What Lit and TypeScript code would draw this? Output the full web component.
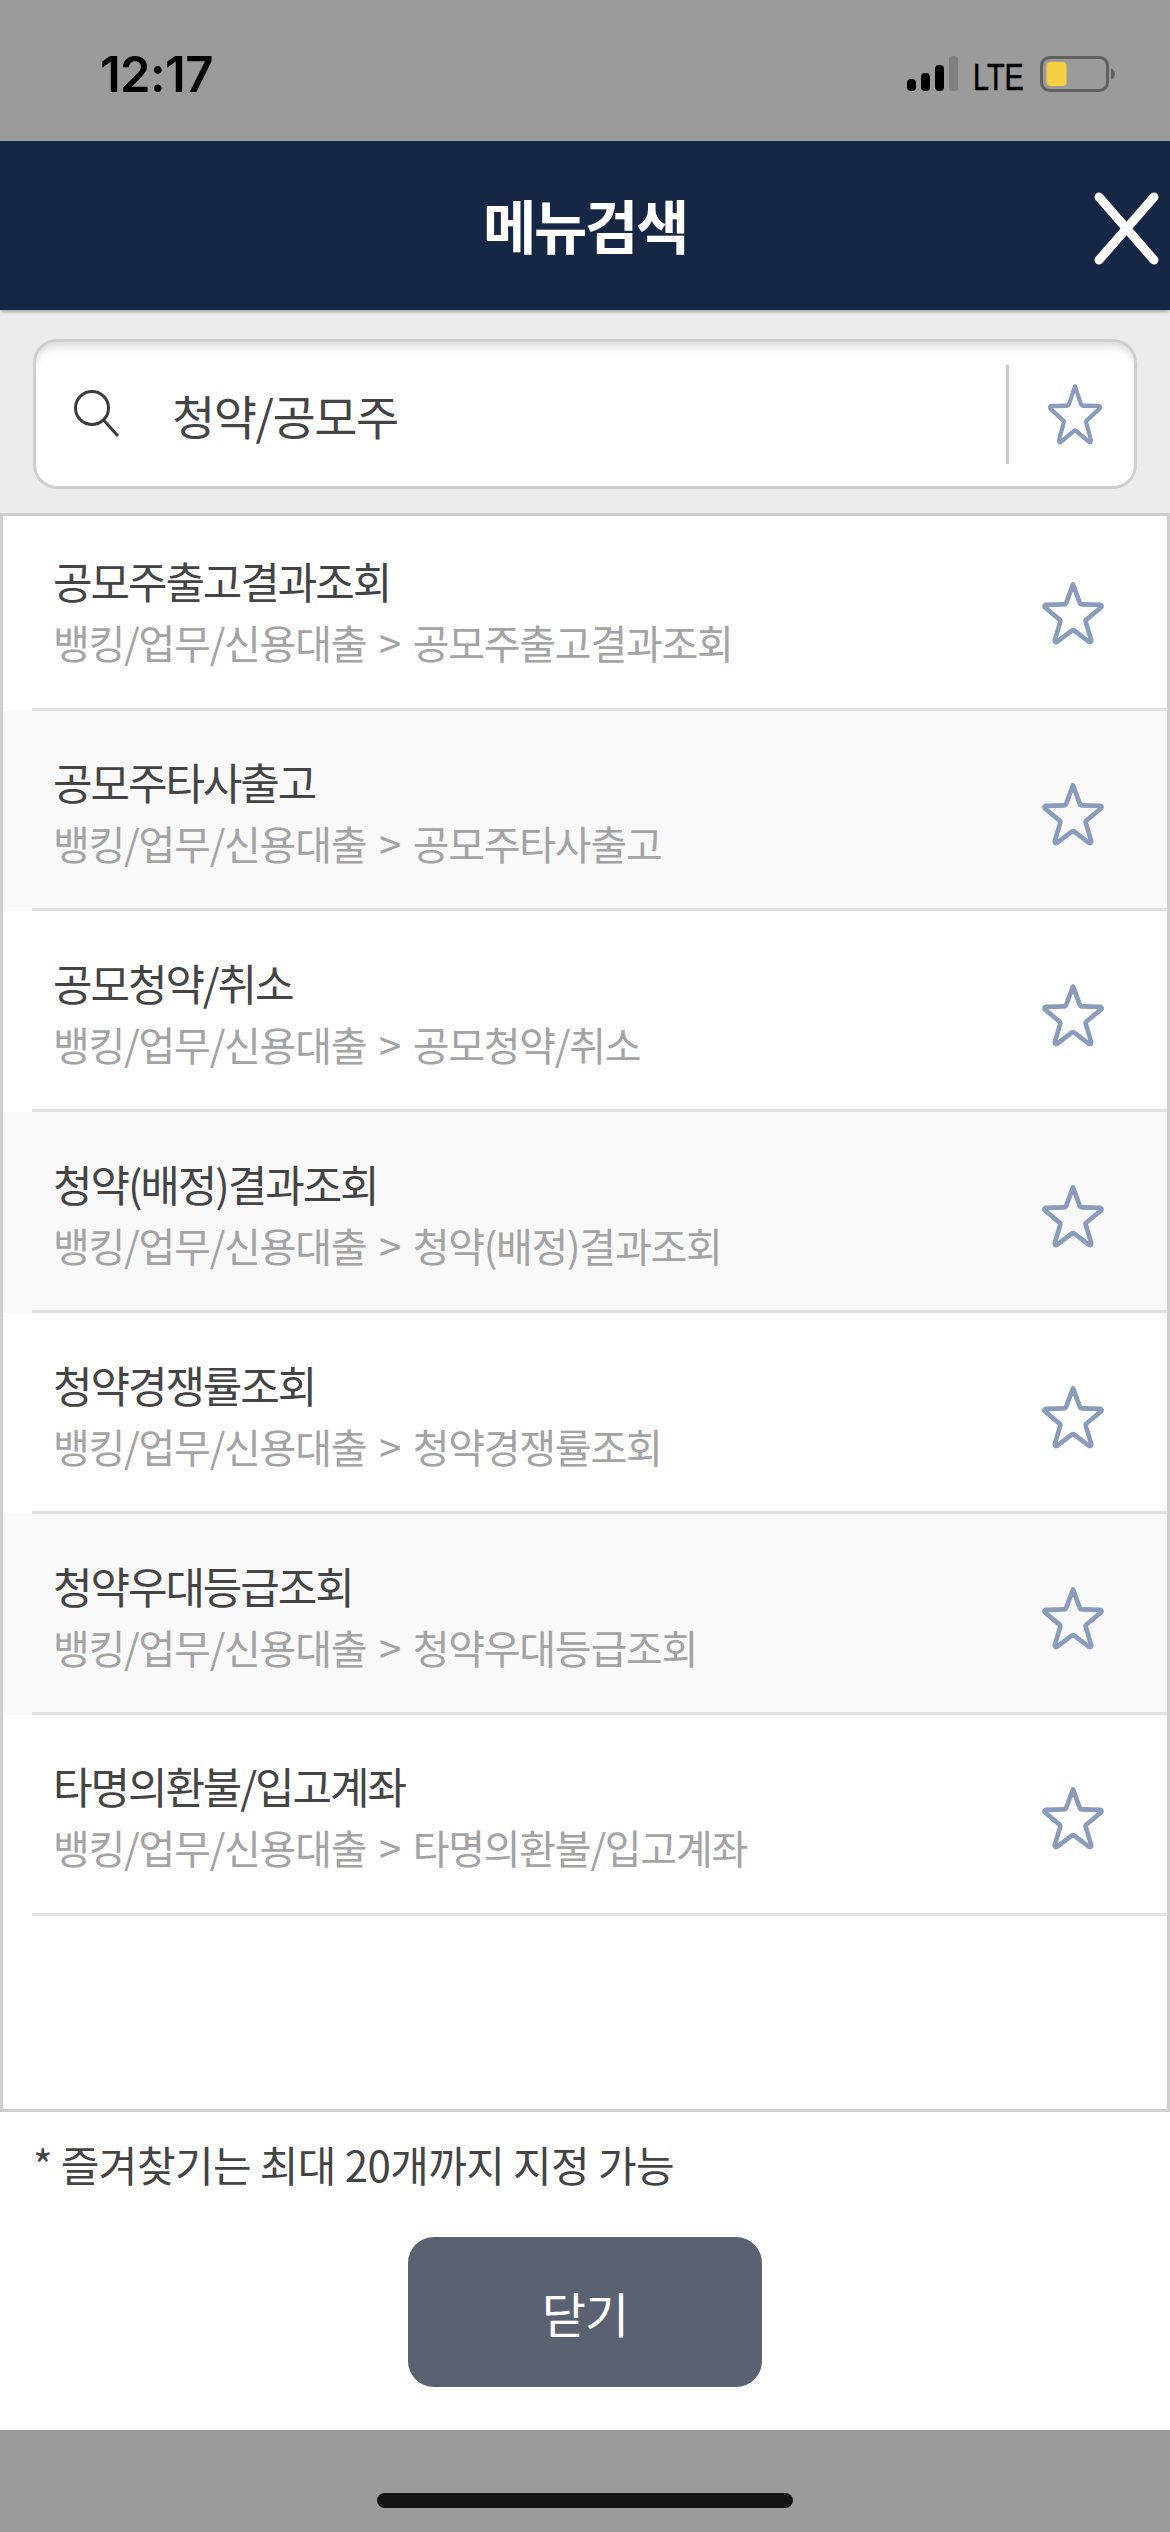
import { LitElement, html, css, svg } from "lit";
import { customElement } from "lit/decorators.js";

const rows = [
  ["공모주출고결과조회", "뱅킹/업무/신용대출 > 공모주출고결과조회"],
  ["공모주타사출고", "뱅킹/업무/신용대출 > 공모주타사출고"],
  ["공모청약/취소", "뱅킹/업무/신용대출 > 공모청약/취소"],
  ["청약(배정)결과조회", "뱅킹/업무/신용대출 > 청약(배정)결과조회"],
  ["청약경쟁률조회", "뱅킹/업무/신용대출 > 청약경쟁률조회"],
  ["청약우대등급조회", "뱅킹/업무/신용대출 > 청약우대등급조회"],
  ["타명의환불/입고계좌", "뱅킹/업무/신용대출 > 타명의환불/입고계좌"],
];

const star = (cls: string) => html`<svg class=${cls} viewBox="0 0 60 60" preserveAspectRatio="none" fill="none" stroke="#8a9cbc" stroke-width="4.2" stroke-linejoin="round" stroke-linecap="round">
  ${svg`<path d="M30 4 L36.2 20.8 Q36.8 22.2 38.2 22.2 L55 22.6 Q56.8 23.4 55.4 25 L42.2 36 Q41.2 36.8 41.6 38 L46.6 54.6 Q46.6 57.4 44.6 56.2 L31.2 46 Q30 45.2 28.8 46 L15.4 56.2 Q13.4 57.4 13.4 54.6 L18.4 38 Q18.8 36.8 17.8 36 L4.6 25 Q3.2 23.4 5 22.6 L21.8 22.2 Q23.2 22.2 23.8 20.8 Z"/>`}
</svg>`;

@customElement("app-root")
export class AppRoot extends LitElement {
  static styles = css`
    :host { display: block; width: 1170px; height: 2532px; font-family: "Noto Sans CJK KR", "Noto Sans", sans-serif; background: #fff; overflow: hidden; }
    .page { display: flex; flex-direction: column; height: 2532px; }
    .status { height: 141px; flex: none; background: #9b9b9b; display: flex; align-items: flex-start; justify-content: space-between; box-sizing: border-box; }
    .time { font: 600 49px/1 Inter, "Liberation Sans", sans-serif; color: #000; margin: 50px 0 0 100px; letter-spacing: -0.6px; }
    .status-right { display: flex; align-items: flex-start; margin: 56px 55px 0 0; }
    .signal { width: 52px; height: 35px; flex: none; }
    .lte { font: 400 36px/1 "Liberation Sans", sans-serif; -webkit-text-stroke: 0.6px #000; color: #000; margin: 4px 0 0 14px; width: 53px; white-space: nowrap; transform: scaleX(0.8); transform-origin: left center; }
    .battery { width: 75px; height: 36px; margin-left: 14px; flex: none; }
    .header { height: 169px; flex: none; background: #162745; display: flex; align-items: center; justify-content: center; position: relative; box-shadow: 0 3px 3px -1px #a8a8a8; z-index: 1; }
    .title { color: #fff; font-size: 58px; font-weight: 700; letter-spacing: -2.4px; line-height: 1; margin-top: -3px; }
    .close { position: absolute; left: 1094px; top: 51px; width: 66px; height: 74px; }
    .search-wrap { height: 203px; flex: none; background: #ececec; padding: 29px 33px 0 33px; box-sizing: border-box; }
    .search { height: 150px; box-sizing: border-box; background: #fff; border: 3px solid #cfcfcf; border-radius: 24px; display: flex; align-items: center; box-shadow: inset 0 10px 10px -6px #d8d8d8; }
    .mag { width: 46px; height: 48px; margin-left: 38px; flex: none; }
    .query { font-size: 47px; color: #444; letter-spacing: -1.5px; margin-left: 52px; flex: 1; line-height: 1; }
    .divider { width: 3px; height: 99px; background: #c8c8c8; flex: none; }
    .search-star { width: 58px; height: 64px; margin: 0 30px 0 37px; flex: none; }
    .list { height: 1599px; flex: none; box-sizing: border-box; border: 3px solid #cecece; background: #fff; overflow: hidden; }
    .rows { margin-top: -6.4px; }
    .row { height: 200.9px; box-sizing: border-box; position: relative; display: flex; align-items: center; padding-left: 50px; }
    .row:nth-child(even) { background: #f9f9f9; }
    .row::after { content: ""; position: absolute; left: 29px; right: 0; bottom: 0; height: 3px; background: #e2e2e2; }
    .text { flex: 1; display: flex; flex-direction: column; margin-top: 2px; }
    .name { font-size: 43px; line-height: 60px; color: #444; letter-spacing: -2.1px; white-space: nowrap; }
    .path { font-size: 40px; line-height: 60px; color: #a3a3a3; letter-spacing: -1.25px; word-spacing: 5px; white-space: nowrap; margin-top: 2px; }
    .row-star { width: 66px; height: 66px; margin: 6px 61px 0 0; flex: none; }
    .note { font-size: 42px; line-height: 1; color: #444; letter-spacing: -0.6px; margin: 31px 0 0 33px; height: 41px; white-space: nowrap; }
    .btn-row { display: flex; justify-content: center; margin-top: 53px; }
    .btn { width: 354px; height: 150px; border-radius: 26px; background: #5a6170; color: #fff; font-size: 48px; letter-spacing: -1px; display: flex; align-items: center; justify-content: center; }
    .bottom { margin-top: auto; height: 102px; flex: none; background: #9b9b9b; display: flex; justify-content: center; }
    .home { width: 416px; height: 15px; border-radius: 8px; background: #141414; margin-top: 63px; }
  `;

  render() {
    return html`<div class="page">
      <div class="status">
        <div class="time">12:17</div>
        <div class="status-right">
          <svg class="signal" viewBox="0 0 52 35">
            <rect x="0" y="23" width="9" height="12" rx="4" fill="#000"/>
            <rect x="14" y="17" width="9" height="18" rx="4" fill="#000"/>
            <rect x="28" y="9" width="9" height="26" rx="4" fill="#000"/>
            <rect x="42" y="0" width="9" height="35" rx="3" fill="#808080"/>
          </svg>
          <div class="lte">LTE</div>
          <svg class="battery" viewBox="0 0 75 36">
            <rect x="1.5" y="1.5" width="66" height="33" rx="8" fill="none" stroke="#606060" stroke-width="3"/>
            <rect x="6.5" y="6" width="20" height="24" rx="4" fill="#f6cf43"/>
            <path d="M71 12 Q75 15 75 18 Q75 21 71 24 Z" fill="#606060"/>
          </svg>
        </div>
      </div>
      <div class="header">
        <div class="title">메뉴검색</div>
        <svg class="close" viewBox="0 0 66 74" stroke="#fff" stroke-width="9" stroke-linecap="round">
          <line x1="5" y1="5" x2="60" y2="68"/>
          <line x1="60" y1="5" x2="5" y2="68"/>
        </svg>
      </div>
      <div class="search-wrap">
        <div class="search">
          <svg class="mag" viewBox="0 0 46 48" fill="none" stroke="#3c3c3c" stroke-width="3">
            <circle cx="18" cy="18" r="16.5"/>
            <line x1="29.5" y1="30" x2="44" y2="46"/>
          </svg>
          <div class="query">청약/공모주</div>
          <div class="divider"></div>
          ${star("search-star")}
        </div>
      </div>
      <div class="list">
        <div class="rows">
          ${rows.map(([a, b]) => html`<div class="row">
            <div class="text"><div class="name">${a}</div><div class="path">${b}</div></div>
            ${star("row-star")}
          </div>`)}
        </div>
      </div>
      <div class="note">* 즐겨찾기는 최대 20개까지 지정 가능</div>
      <div class="btn-row"><div class="btn">닫기</div></div>
      <div class="bottom"><div class="home"></div></div>
    </div>`;
  }
}
